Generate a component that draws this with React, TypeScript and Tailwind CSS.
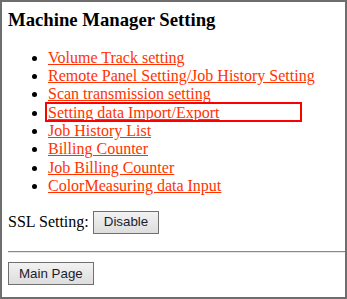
const links = [
  'Volume Track setting',
  'Remote Panel Setting/Job History Setting',
  'Scan transmission setting',
  'Setting data Import/Export',
  'Job History List',
  'Billing Counter',
  'Job Billing Counter',
  'ColorMeasuring data Input',
];

function PageButton({ label }: { label: string }) {
  return (
    <button
      type="button"
      className="h-[23px] px-[10px] border border-[#707070] bg-gradient-to-b from-[#f2f2f2] to-[#dddddd] text-[13.33px] leading-none text-[#1c1c2e] font-['Liberation_Sans',Arial,sans-serif]"
    >
      {label}
    </button>
  );
}

export default function App() {
  return (
    <div className="w-[347px] h-[299px] border-2 border-[#6e6e6e] bg-white overflow-hidden font-['Liberation_Serif','Times_New_Roman',serif] text-black">
      <div className="pl-[6px] pt-[7px]">
        <h3 className="text-[18.72px] font-bold leading-[1.149]">Machine Manager Setting</h3>

        <ul className="mt-[18px] pl-[40px] list-disc text-[16px] leading-[1.149]">
          {links.map((label, i) => (
            <li key={label} className="relative">
              <a href="#" className="text-[#ff3300] underline decoration-[#ff3300]">
                {label}
              </a>
              {i === 3 && (
                <span className="absolute -top-[2px] -left-[3px] w-[257px] h-[20px] border-2 border-[#ff0000]" />
              )}
            </li>
          ))}
        </ul>

        <div className="mt-[15px] flex items-center gap-[4px] text-[16px] leading-[1.149]">
          <span>SSL Setting:</span>
          <PageButton label="Disable" />
        </div>
      </div>

      <hr className="mt-[17px] ml-[6px] h-[2px] border-0 border-t border-b border-t-[#8a8a8a] border-b-[#e6e6e6]" />

      <div className="pl-[6px] mt-[8px]">
        <PageButton label="Main Page" />
      </div>
    </div>
  );
}
